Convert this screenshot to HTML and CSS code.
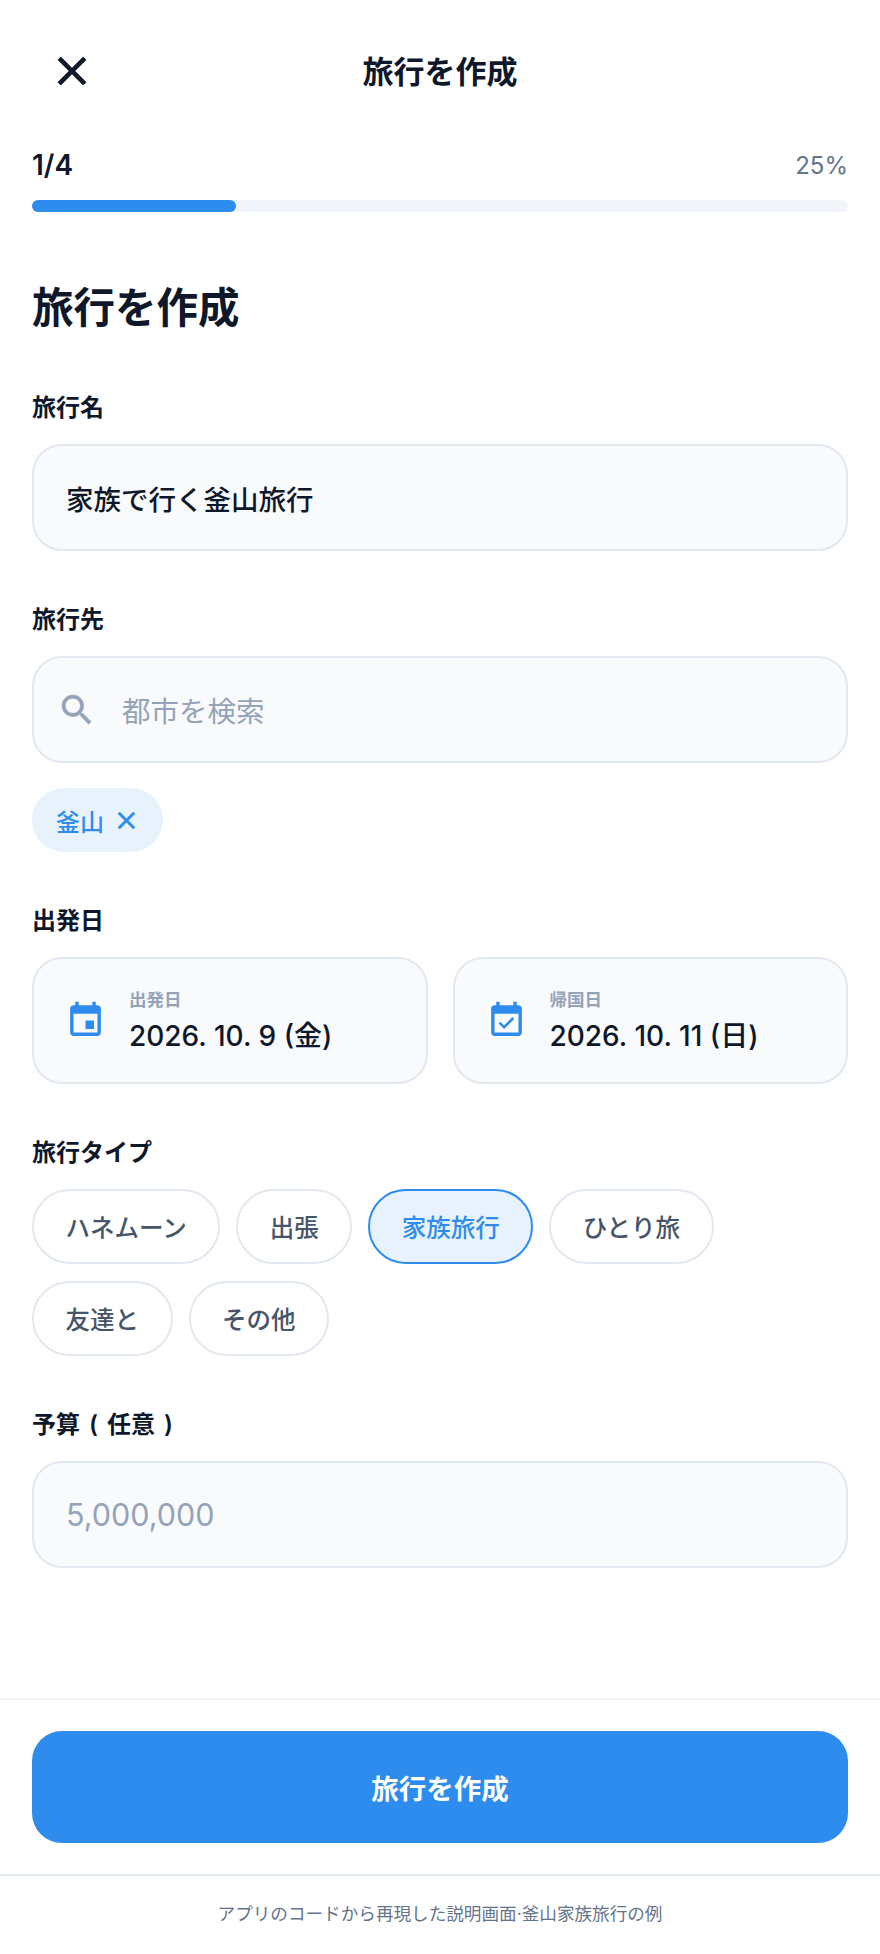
FILE: index.html
```html
<!DOCTYPE html>
<html lang="ja">
<head>
  <meta charset="UTF-8">
  <title>旅行を作成</title>
  <link rel="stylesheet" href="styles.css">
</head>
<body>
  <div class="page">

    <header class="topbar">
      <button class="close-btn" aria-label="閉じる">
        <svg class="icon-close" viewBox="0 0 24 24"><path d="M19 6.41L17.59 5 12 10.59 6.41 5 5 6.41 10.59 12 5 17.59 6.41 19 12 13.41 17.59 19 19 17.59 13.41 12z"/></svg>
      </button>
      <div class="topbar-title">旅行を作成</div>
    </header>

    <div class="progress">
      <div class="progress-row">
        <span class="progress-step">1/4</span>
        <span class="progress-percent">25%</span>
      </div>
      <div class="progress-track">
        <div class="progress-fill" style="width: 25%"></div>
      </div>
    </div>

    <main class="form">
      <h1 class="form-title">旅行を作成</h1>

      <section class="field">
        <div class="field-label">旅行名</div>
        <div class="input">家族で行く釜山旅行</div>
      </section>

      <section class="field">
        <div class="field-label">旅行先</div>
        <div class="input input-search">
          <svg class="icon-search" viewBox="0 0 24 24"><path d="M15.5 14h-.79l-.28-.27C15.41 12.59 16 11.11 16 9.5 16 5.91 13.09 3 9.5 3S3 5.91 3 9.5 5.91 16 9.5 16c1.61 0 3.09-.59 4.23-1.57l.27.28v.79l5 4.99L20.49 19l-4.99-5zm-6 0C7.01 14 5 11.99 5 9.5S7.01 5 9.5 5 14 7.01 14 9.5 11.99 14 9.5 14z"/></svg>
          <span class="placeholder">都市を検索</span>
        </div>
        <div class="city-tag">
          釜山
          <svg class="icon-tag-close" viewBox="0 0 24 24"><path d="M19 6.41L17.59 5 12 10.59 6.41 5 5 6.41 10.59 12 5 17.59 6.41 19 12 13.41 17.59 19 19 17.59 13.41 12z"/></svg>
        </div>
      </section>

      <section class="field">
        <div class="field-label">出発日</div>
        <div class="date-grid">
          <div class="date-card">
            <svg class="icon-date" viewBox="0 0 24 24"><path d="M17 12h-5v5h5v-5zM16 1v2H8V1H6v2H5c-1.11 0-1.99.9-1.99 2L3 19c0 1.1.89 2 2 2h14c1.1 0 2-.9 2-2V5c0-1.1-.9-2-2-2h-1V1h-2zm3 18H5V8h14v11z"/></svg>
            <div>
              <div class="date-label">出発日</div>
              <div class="date-value">2026. 10. 9 (金)</div>
            </div>
          </div>
          <div class="date-card">
            <svg class="icon-date" viewBox="0 0 24 24"><path d="M16.53 11.06L15.47 10l-4.88 4.88-2.12-2.12-1.06 1.06L10.59 17l5.94-5.94zM19 3h-1V1h-2v2H8V1H6v2H5c-1.11 0-1.99.9-1.99 2L3 19c0 1.1.89 2 2 2h14c1.1 0 2-.9 2-2V5c0-1.1-.9-2-2-2zm0 16H5V8h14v11z"/></svg>
            <div>
              <div class="date-label">帰国日</div>
              <div class="date-value">2026. 10. 11 (日)</div>
            </div>
          </div>
        </div>
      </section>

      <section class="field">
        <div class="field-label">旅行タイプ</div>
        <div class="type-list">
          <div class="type-chip">ハネムーン</div>
          <div class="type-chip">出張</div>
          <div class="type-chip selected">家族旅行</div>
          <div class="type-chip">ひとり旅</div>
          <div class="type-chip">友達と</div>
          <div class="type-chip">その他</div>
        </div>
      </section>

      <section class="field">
        <div class="field-label label-spaced">予算 ( 任意 )</div>
        <div class="input input-number placeholder">5,000,000</div>
      </section>
    </main>

    <div class="submit-bar">
      <button class="submit-btn">旅行を作成</button>
    </div>

    <footer class="caption">アプリのコードから再現した説明画面·釜山家族旅行の例</footer>

  </div>
</body>
</html>
```

FILE: styles.css
```css
* {
  box-sizing: border-box;
}
body {
  margin: 0;
  background-color: white;
  color: #0f172a;
  font-family: Inter, "Noto Sans CJK JP", sans-serif;
}
.page {
  display: flex;
  flex-direction: column;
  height: 1954px;
}

/* header */
.topbar {
  position: relative;
  height: 142px;
  padding-bottom: 4px;
  display: flex;
  align-items: center;
  justify-content: center;
}
.close-btn {
  position: absolute;
  left: 48px;
  top: 47px;
  width: 48px;
  height: 48px;
  padding: 0;
  border: none;
  background: none;
}
.icon-close {
  display: block;
  width: 48px;
  height: 48px;
  fill: #0f172a;
  stroke: #0f172a;
  stroke-width: 0.4;
}
.topbar-title {
  font-size: 31px;
  font-weight: 700;
}

/* progress */
.progress {
  padding: 6px 32px 0;
}
.progress-row {
  display: flex;
  justify-content: space-between;
  align-items: center;
  height: 34px;
}
.progress-step {
  font-size: 28px;
  font-weight: 600;
}
.progress-percent {
  font-size: 24px;
  color: #64748b;
}
.progress-track {
  height: 12px;
  margin-top: 18px;
  background-color: #f1f5f9;
  border-radius: 6px;
}
.progress-fill {
  height: 100%;
  background-color: #2d8cee;
  border-radius: 6px;
}

/* form */
.form {
  flex: 1;
  padding: 68px 32px 0;
}
.form-title {
  margin: 0;
  font-size: 41.5px;
  line-height: 56px;
  font-weight: 700;
}
.field {
  margin-top: 51px;
}
.form-title + .field {
  margin-top: 54px;
}
.field-label {
  height: 34px;
  margin-bottom: 20px;
  font-size: 24px;
  line-height: 36px;
  font-weight: 600;
}
.label-spaced {
  word-spacing: 3px;
}
.input {
  display: flex;
  align-items: center;
  height: 107px;
  padding: 0 32px;
  background-color: #f8fafc;
  border: 2px solid #e2e8f0;
  border-radius: 30px;
  font-size: 27.5px;
  font-weight: 500;
}
.input-search {
  padding-left: 23px;
  gap: 25px;
}
.placeholder {
  color: #94a3b8;
  font-size: 28.5px;
  font-weight: 400;
}
.input-number.placeholder {
  font-size: 30.5px;
}
.icon-search {
  width: 40px;
  height: 40px;
  fill: #94a3b8;
  stroke: #94a3b8;
  stroke-width: 0.3;
}
.city-tag {
  display: inline-flex;
  align-items: center;
  gap: 8px;
  height: 64px;
  margin-top: 25px;
  padding: 0 22px 0 24px;
  background-color: #e8f2fd;
  border-radius: 32px;
  color: #2d8cee;
  font-size: 24px;
  font-weight: 500;
}
.icon-tag-close {
  width: 29px;
  height: 29px;
  fill: #2d8cee;
  stroke: #2d8cee;
  stroke-width: 0.5;
}

/* dates */
.date-grid {
  display: grid;
  grid-template-columns: 1fr 1fr;
  gap: 25px;
}
.date-card {
  display: flex;
  align-items: center;
  gap: 23px;
  height: 127px;
  padding-left: 31px;
  background-color: #f8fafc;
  border: 2px solid #e2e8f0;
  border-radius: 30px;
}
.icon-date {
  width: 41px;
  height: 41px;
  fill: #2d8cee;
  flex-shrink: 0;
}
.date-label {
  font-size: 17.5px;
  line-height: 24px;
  font-weight: 600;
  color: #94a3b8;
}
.date-value {
  margin-top: 6px;
  font-size: 28px;
  line-height: 36px;
  font-weight: 500;
}

/* trip type */
.type-list {
  display: flex;
  flex-wrap: wrap;
  gap: 17px 16px;
}
.type-chip {
  display: flex;
  align-items: center;
  height: 75px;
  padding: 0 31.5px;
  background-color: white;
  border: 2px solid #e2e8f0;
  border-radius: 38px;
  color: #475569;
  font-size: 24.5px;
  font-weight: 500;
}
.type-chip.selected {
  background-color: #e8f2fd;
  border-color: #2d8cee;
  color: #2d8cee;
}

/* bottom */
.submit-bar {
  padding: 31px 32px;
  border-top: 2px solid #f1f5f9;
  border-bottom: 2px solid #e2e8f0;
}
.submit-btn {
  display: block;
  width: 100%;
  height: 112px;
  border: none;
  border-radius: 30px;
  background-color: #2d8cee;
  color: white;
  font-family: inherit;
  font-size: 27.5px;
  font-weight: 700;
}
.caption {
  height: 78px;
  padding-top: 23px;
  text-align: center;
  color: #64748b;
  font-size: 17.6px;
  line-height: 30px;
}
```
